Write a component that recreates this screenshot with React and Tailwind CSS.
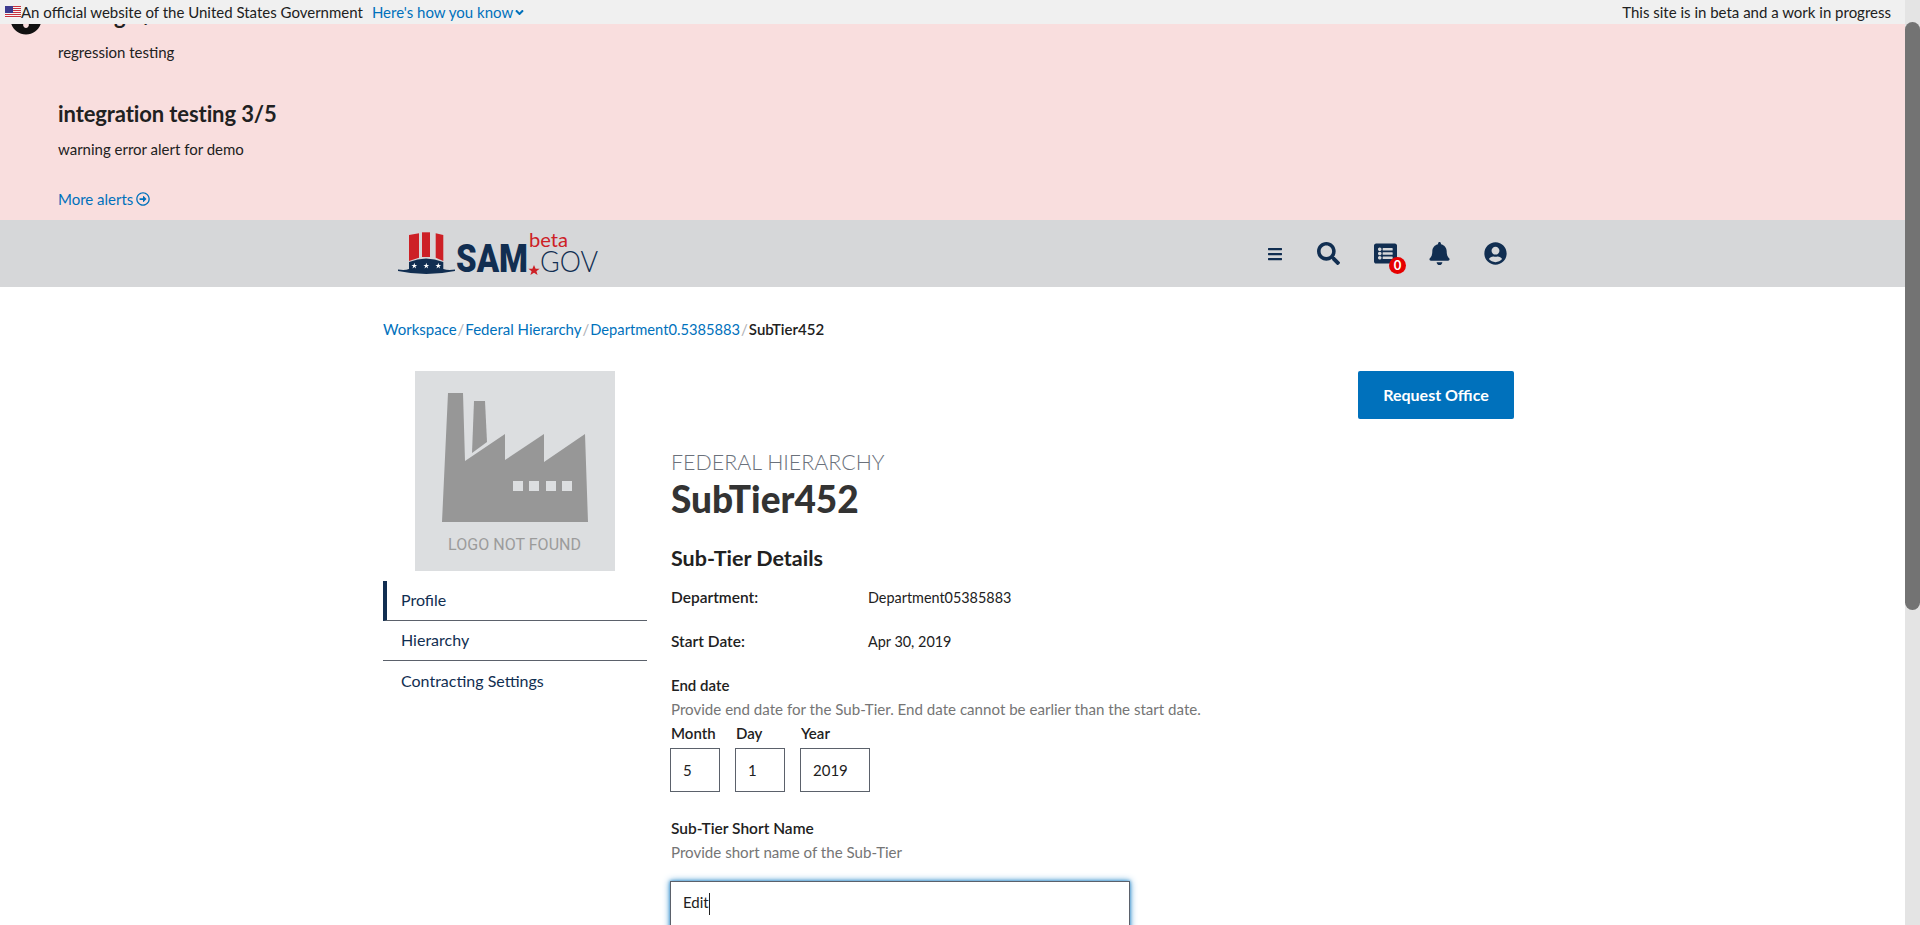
import React from 'react';
import {
  FaBars,
  FaSearch,
  FaListAlt,
  FaBell,
  FaUserCircle,
  FaRegArrowAltCircleRight,
  FaAngleDown,
  FaExclamationCircle
} from 'react-icons/fa';

const UsFlag = () => (
  <svg width="16" height="12" viewBox="0 0 16 12" className="shrink-0">
    <rect width="16" height="12" fill="#f5f5f5" />
    <rect y="0" width="16" height="1" fill="#c8313e" />
    <rect y="2" width="16" height="1" fill="#c8313e" />
    <rect y="4" width="16" height="1" fill="#c8313e" />
    <rect y="6" width="16" height="1" fill="#c8313e" />
    <rect y="8" width="16" height="1" fill="#c8313e" />
    <rect y="10" width="16" height="1" fill="#c8313e" />
    <rect width="8" height="7" fill="#3c3b8e" />
  </svg>
);

const SamLogo = () => (
  <svg width="202" height="48" viewBox="0 0 202 48" className="block">
    <path d="M11 5 L21 3.3 V27.7 L11 31 Z" fill="#cd2026" />
    <path d="M24 2.3 H32 V27 H24 Z" fill="#cd2026" />
    <path d="M37.7 3.3 L45.3 5 V31 L37.7 27.7 Z" fill="#cd2026" />
    <path d="M11 32 Q28 25 45.3 32 V40 H11 Z" fill="#112e51" />
    <path d="M0 39.5 Q7 40.5 11 39 H45.3 Q50 40.5 57 39.5 V41 Q28 47 0 41 Z" fill="#112e51" />
    <polygon points="16.3,32.8 17,35 19.2,35 17.4,36.3 18.1,38.4 16.3,37.1 14.5,38.4 15.2,36.3 13.4,35 15.6,35" fill="#fff" />
    <polygon points="28.3,32.8 29,35 31.2,35 29.4,36.3 30.1,38.4 28.3,37.1 26.5,38.4 27.2,36.3 25.4,35 27.6,35" fill="#fff" />
    <polygon points="40.3,32.8 41,35 43.2,35 41.4,36.3 42.1,38.4 40.3,37.1 38.5,38.4 39.2,36.3 37.4,35 39.6,35" fill="#fff" />
    <text x="58" y="42" fontFamily="Roboto, sans-serif" fontWeight="900" fontSize="39" fill="#112e51" textLength="72" lengthAdjust="spacingAndGlyphs">SAM</text>
    <polygon points="136,35 137.6,38.8 141.6,38.8 138.4,41.2 139.6,45 136,42.8 132.4,45 133.6,41.2 130.4,38.8 134.4,38.8" fill="#cd2026" />
    <text x="142" y="42" fontFamily="Lato, sans-serif" fontWeight="300" fontSize="30" fill="#112e51" textLength="58" lengthAdjust="spacingAndGlyphs">GOV</text>
    <text x="131" y="17" fontFamily="Lato, sans-serif" fontWeight="400" fontSize="20" fill="#cd2026" textLength="39" lengthAdjust="spacingAndGlyphs">beta</text>
  </svg>
);

const FactoryLogo = () => (
  <svg width="200" height="200" viewBox="0 0 200 200" className="block">
    <rect width="200" height="200" fill="#dcdee0" />
    <polygon points="27,151 33,22 48,22 50,90 90,63 90,89 129,63 129,91 170,63 173,151" fill="#979797" />
    <polygon points="59,30 70,30 72,71 57,82" fill="#979797" />
    <rect x="98" y="110" width="10" height="10" fill="#dcdee0" />
    <rect x="114" y="110" width="10" height="10" fill="#dcdee0" />
    <rect x="131" y="110" width="10" height="10" fill="#dcdee0" />
    <rect x="147" y="110" width="10" height="10" fill="#dcdee0" />
    <text x="33" y="179" fontFamily="Roboto, sans-serif" fontSize="16" fill="#9b9b9b" textLength="133">LOGO NOT FOUND</text>
  </svg>
);

const sideLinks = ['Profile', 'Hierarchy', 'Contracting Settings'];

const DateField = ({ label, value, width }) => (
  <div className="flex flex-col">
    <span className="h-[21px] pl-px leading-[21px] font-semibold text-[#212121]">{label}</span>
    <div className={`h-[44px] ${width} border border-[#5b616b] flex items-center pl-3 mt-[4px]`}>{value}</div>
  </div>
);

const App = () => {
  return (
    <div className="h-screen flex overflow-hidden bg-white text-[15px] text-[#212121] font-['Lato','Noto_Sans',sans-serif]">
      <div className="flex-1 min-w-0 flex flex-col overflow-hidden">
        {/* Gov banner */}
        <div className="relative z-10 h-6 shrink-0 bg-[#f0f0f0] flex items-center justify-between pl-[5px] pr-[14px] text-[15px]">
          <div className="flex items-center">
            <UsFlag />
            <span className="whitespace-nowrap">An official website of the United States Government</span>
            <a className="ml-[9px] text-[#0071bc] flex items-center whitespace-nowrap">
              Here's how you know
              <FaAngleDown className="text-[13px]" />
            </a>
          </div>
          <span className="whitespace-nowrap">This site is in beta and a work in progress</span>
        </div>

        {/* Alerts, scrolled partly under the banner */}
        <div className="h-[196px] shrink-0 bg-[#f9dede] flex flex-col justify-end overflow-hidden pl-[58px] pb-[11px]">
          <div className="relative">
            <FaExclamationCircle className="absolute -left-[48px] top-[1px] text-[32px] text-[#111]" />
            <h3 className="text-[22px] leading-[28px] font-bold">testing 1/12</h3>
          </div>
          <p className="mt-[12px] leading-[20px]">regression testing</p>
          <h3 className="mt-[38px] text-[22px] leading-[28px] font-bold tracking-[-0.1px]">integration testing 3/5</h3>
          <p className="mt-[11px] leading-[20px]">warning error alert for demo</p>
          <a className="mt-[30px] h-[20px] text-[#0071bc] flex items-center">
            More alerts
            <FaRegArrowAltCircleRight className="ml-[3px] text-[14px]" />
          </a>
        </div>

        {/* Header */}
        <div className="h-[67px] shrink-0 bg-[#d6d7d9]">
          <div className="w-[1139px] ml-[383px] h-full flex items-center justify-between px-[15px] text-[#112e51]">
            <SamLogo />
            <div className="flex items-center text-[23px]">
              <FaBars className="text-[16px]" />
              <FaSearch className="ml-[34px]" />
              <div className="relative ml-[34px]">
                <FaListAlt />
                <span className="absolute -right-[9px] -bottom-[9px] w-[17px] h-[17px] rounded-full bg-[#e60000] text-white text-[13px] leading-[17px] font-bold text-center">0</span>
              </div>
              <FaBell className="ml-[31px]" />
              <FaUserCircle className="ml-[33px]" />
            </div>
          </div>
        </div>

        {/* Main */}
        <div className="w-[1139px] ml-[383px]">
          <div className="h-[84px] pt-[32px] leading-[20px] text-[#aeb0b5] whitespace-nowrap">
            <a className="text-[#0071bc]">Workspace</a>
            <span className="mx-px">/</span>
            <a className="text-[#0071bc]">Federal Hierarchy</a>
            <span className="mx-px">/</span>
            <a className="text-[#0071bc] text-[14.7px]">Department0.5385883</a>
            <span className="mx-px">/</span>
            <span className="text-[#212121] font-semibold">SubTier452</span>
          </div>

          <div className="flex">
            <div className="w-[264px] shrink-0">
              <div className="pl-[32px]">
                <FactoryLogo />
              </div>
              <ul className="mt-[10px] text-[16px] text-[#112e51]">
                {sideLinks.map((link, index) => (
                  <li
                    key={link}
                    className={index === 0
                      ? 'h-[40px] flex items-center pb-px pl-[14px] border-b border-[#5b616b] border-l-4 border-l-[#112e51]'
                      : index === 1
                        ? 'h-[40px] flex items-center pb-px pl-[18px] border-b border-[#5b616b]'
                        : 'h-[40px] flex items-center pb-px pl-[18px]'}
                  >
                    {link}
                  </li>
                ))}
              </ul>
            </div>

            <div className="flex-1 ml-[24px] relative">
              <button className="absolute right-[8px] top-0 w-[156px] h-[48px] bg-[#0071bc] text-white text-[16px] font-bold rounded-[2px]">Request Office</button>

              <div className="pt-[78px]">
                <div className="text-[21.4px] leading-[26px] font-light text-[#6b717b]">FEDERAL HIERARCHY</div>
                <h1 className="text-[37px] leading-[46px] font-black text-[#333] mt-[1px]">SubTier452</h1>
                <h2 className="text-[21.5px] leading-[28px] font-bold mt-[22px]">Sub-Tier Details</h2>

                <div className="flex mt-[12px] h-[28px] items-center">
                  <span className="w-[197px] text-[15.5px] font-semibold">Department:</span>
                  <span className="text-[14.4px]">Department05385883</span>
                </div>
                <div className="flex mt-[16px] h-[28px] items-center">
                  <span className="w-[197px] text-[15.5px] font-semibold">Start Date:</span>
                  <span className="text-[14.4px]">Apr 30, 2019</span>
                </div>

                <div className="mt-[17px] h-[24px] leading-[24px] font-semibold">End date</div>
                <div className="h-[24px] leading-[24px] text-[15.1px] text-[#757575]">Provide end date for the Sub-Tier. End date cannot be earlier than the start date.</div>
                <div className="flex gap-[15px] mt-[2px] -ml-px">
                  <DateField label="Month" value="5" width="w-[50px]" />
                  <DateField label="Day" value="1" width="w-[50px]" />
                  <DateField label="Year" value="2019" width="w-[70px]" />
                </div>

                <div className="mt-[24px] h-[24px] leading-[24px] text-[15.5px] font-semibold">Sub-Tier Short Name</div>
                <div className="h-[24px] leading-[24px] text-[15.1px] text-[#757575]">Provide short name of the Sub-Tier</div>
                <div className="mt-[17px] -ml-px w-[460px] h-[60px] border border-[#5b616b] shadow-[0_0_3px_#3e94cf,0_0_7px_#3e94cf] pl-3 pt-[8px] leading-[24px]">
                  Edit<span className="inline-block w-px h-[22px] bg-[#212121] align-middle"></span>
                </div>
              </div>
            </div>
          </div>
        </div>
      </div>

      {/* Scrollbar */}
      <div className="w-[15px] shrink-0 bg-[#e4e4e4] pt-[22px]">
        <div className="h-[588px] bg-[#737373] rounded-full"></div>
      </div>
    </div>
  );
};

export default App;
